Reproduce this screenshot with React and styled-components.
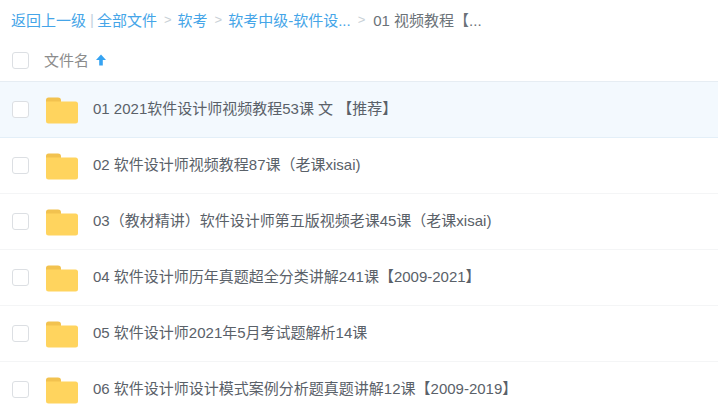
import React from "react";
import styled, { createGlobalStyle } from "styled-components";

const GlobalStyle = createGlobalStyle`
  html, body {
    margin: 0;
    padding: 0;
    background: #fff;
    overflow: hidden;
  }
  body {
    font-family: "Liberation Sans", "Noto Sans CJK SC", sans-serif;
  }
`;

const Page = styled.div`
  width: 718px;
  height: 413px;
  overflow: hidden;
  font-size: 15px;
`;

const Crumbs = styled.div`
  display: flex;
  align-items: center;
  height: 38px;
  padding: 0 0 2px 11px;
  white-space: nowrap;
`;

const Crumb = styled.a`
  color: ${(p) => (p.$current ? "#6b7278" : "#45a5e8")};
  margin-left: ${(p) => (p.$current ? "2px" : "0")};
`;

const Bar = styled.span`
  color: #c4d2de;
  margin: 0 3px 0 4px;
`;

const Sep = styled.span`
  color: #c8d0d6;
  font-size: 13px;
  margin: 0 6px 0 7px;
`;

const HeaderRow = styled.div`
  display: flex;
  align-items: center;
  height: 41px;
  padding-left: 12px;
  border-bottom: 1px solid #e6edf3;
`;

const HeaderLabel = styled.span`
  color: #8c8c8c;
  margin: 0 0 2px 15px;
`;

const SortArrow = styled.svg`
  width: 10px;
  height: 12px;
  margin: 0 0 2px 7px;
`;

const Row = styled.div`
  display: flex;
  align-items: center;
  height: 55px;
  padding-left: 12px;
  background: ${(p) => (p.$active ? "#f3f9fe" : "#fff")};
  border-bottom: 1px solid ${(p) => (p.$active ? "#e3eff8" : "#f4f5f6")};
`;

const Check = styled.span`
  display: block;
  flex: none;
  box-sizing: border-box;
  width: 17px;
  height: 17px;
  background: #fff;
  border: 1px solid #dcdfe3;
  border-radius: 3px;
`;

const FolderIcon = styled.svg`
  flex: none;
  width: 33px;
  height: 27px;
  margin: 2px 0 0 17px;
`;

const Name = styled.span`
  color: #5a6169;
  margin: 0 0 5px 14px;
  white-space: nowrap;
`;

const files = [
  "01 2021软件设计师视频教程53课 文 【推荐】",
  "02 软件设计师视频教程87课（老课xisai)",
  "03（教材精讲）软件设计师第五版视频老课45课（老课xisai)",
  "04 软件设计师历年真题超全分类讲解241课【2009-2021】",
  "05 软件设计师2021年5月考试题解析14课",
  "06 软件设计师设计模式案例分析题真题讲解12课【2009-2019】",
];

const Folder = () => (
  <FolderIcon viewBox="0 0 33 27">
    <path d="M0 3Q0 0.5 2.5 0.5H12Q15 0.5 15 3.5V8H0Z" fill="#f2c24f" />
    <path
      d="M0 4.5H29.5Q32 4.5 32 7V24Q32 26.5 29.5 26.5H2.5Q0 26.5 0 24Z"
      fill="#ffd45e"
    />
  </FolderIcon>
);

export default function App() {
  return (
    <Page>
      <GlobalStyle />
      <Crumbs>
        <Crumb>返回上一级</Crumb>
        <Bar>|</Bar>
        <Crumb>全部文件</Crumb>
        <Sep>&gt;</Sep>
        <Crumb>软考</Crumb>
        <Sep>&gt;</Sep>
        <Crumb>软考中级-软件设...</Crumb>
        <Sep>&gt;</Sep>
        <Crumb $current>01 视频教程【...</Crumb>
      </Crumbs>
      <HeaderRow>
        <Check />
        <HeaderLabel>文件名</HeaderLabel>
        <SortArrow viewBox="0 0 10 12">
          <path d="M5 0.5L10 6H6.8V11.5H3.2V6H0Z" fill="#36a3f2" />
        </SortArrow>
      </HeaderRow>
      {files.map((name, i) => (
        <Row key={name} $active={i === 0}>
          <Check />
          <Folder />
          <Name>{name}</Name>
        </Row>
      ))}
    </Page>
  );
}
